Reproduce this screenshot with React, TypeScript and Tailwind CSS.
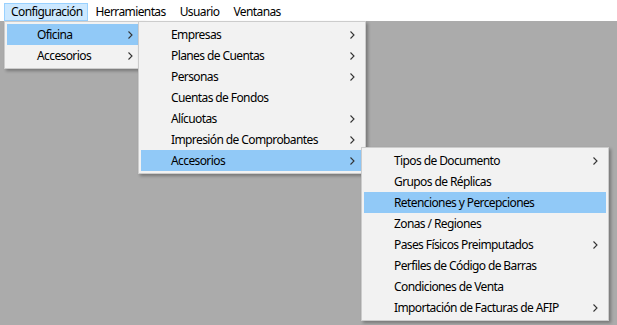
import React from "react";

type Item = { label: string; sub?: boolean; active?: boolean };

const oficina: Item[] = [
  { label: "Oficina", sub: true, active: true },
  { label: "Accesorios", sub: true },
];

const oficinaSub: Item[] = [
  { label: "Empresas", sub: true },
  { label: "Planes de Cuentas", sub: true },
  { label: "Personas", sub: true },
  { label: "Cuentas de Fondos" },
  { label: "Alícuotas", sub: true },
  { label: "Impresión de Comprobantes", sub: true },
  { label: "Accesorios", sub: true, active: true },
];

const accesorios: Item[] = [
  { label: "Tipos de Documento", sub: true },
  { label: "Grupos de Réplicas" },
  { label: "Retenciones y Percepciones", active: true },
  { label: "Zonas / Regiones" },
  { label: "Pases Físicos Preimputados", sub: true },
  { label: "Perfiles de Código de Barras" },
  { label: "Condiciones de Venta" },
  { label: "Importación de Facturas de AFIP", sub: true },
];

function Chevron() {
  return (
    <svg width="5" height="8" viewBox="0 0 5 8" className="shrink-0">
      <polyline points="0.5,0.5 4,4 0.5,7.5" fill="none" stroke="#333" strokeWidth="1.1" />
    </svg>
  );
}

function Menu({ items, className }: { items: Item[]; className: string }) {
  return (
    <div
      className={`absolute bg-[#f2f2f2] border border-[#cccccc] p-[2px] shadow-[2px_2px_3px_rgba(0,0,0,0.3)] ${className}`}
    >
      {items.map((it) => (
        <div
          key={it.label}
          className={`flex h-[21px] items-center justify-between pl-[30px] pr-[8px] ${
            it.active ? "bg-[#91c9f7]" : ""
          }`}
        >
          <span className="whitespace-nowrap">{it.label}</span>
          {it.sub && <Chevron />}
        </div>
      ))}
    </div>
  );
}

export default function App() {
  return (
    <div
      className="relative w-[617px] h-[325px] overflow-hidden bg-[#ababab] text-[12px] tracking-[-0.6px] text-black"
      style={{ fontFamily: '"Noto Sans", "Segoe UI", sans-serif' }}
    >
      <div className="flex h-[21px] items-center bg-white pl-[4px]">
        <div className="flex h-[18px] mt-[2px] items-center border border-[#99d1ff] bg-[#cce8ff] pl-[6px] pr-[5px]">
          Configuración
        </div>
        <div className="border border-transparent px-[6px] mt-[2px]">Herramientas</div>
        <div className="border border-transparent px-[6px] mt-[2px]">Usuario</div>
        <div className="border border-transparent px-[6px] mt-[2px]">Ventanas</div>
      </div>

      <Menu items={oficina} className="left-[4px] top-[21px] w-[140px]" />
      <Menu items={oficinaSub} className="left-[138px] top-[21px] w-[228px]" />
      <Menu items={accesorios} className="left-[361px] top-[147px] w-[248px]" />
    </div>
  );
}
